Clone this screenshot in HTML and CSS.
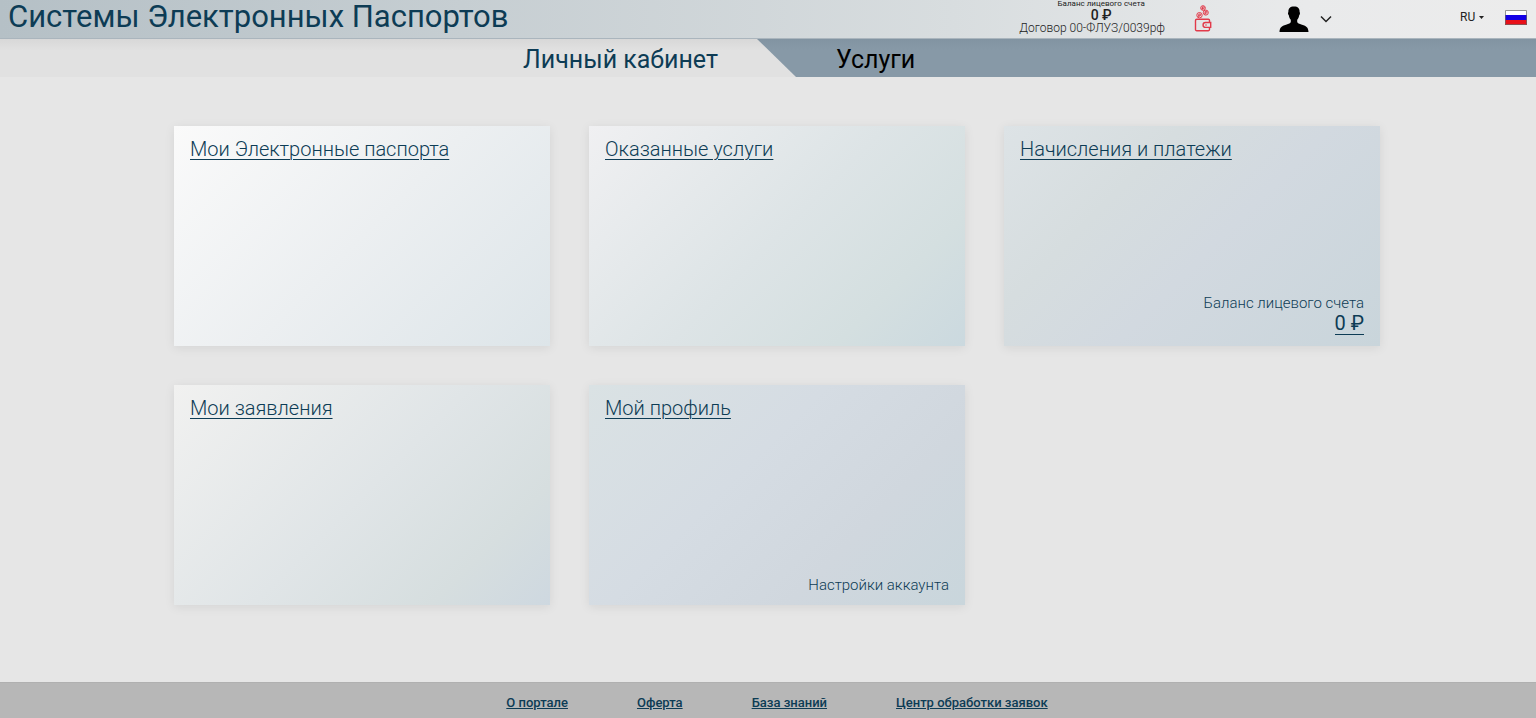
FILE: index.html
```html
<!DOCTYPE html>
<html lang="ru">
<head>
<meta charset="utf-8">
<meta name="viewport" content="width=device-width, initial-scale=1">
<title>Системы Электронных Паспортов</title>
<link rel="stylesheet" href="styles.css">
</head>
<body>
<header class="header">
  <h1 class="brand">Системы Электронных Паспортов</h1>
  <div class="account">
    <div class="account-balance">
      <span class="account-label">Баланс лицевого счета</span>
      <span class="account-sum">0 ₽</span>
    </div>
    <span class="account-contract">Договор 00-ФЛУЗ/0039рф</span>
  </div>
  <button class="icon-button wallet" type="button" aria-label="Пополнить счет">
    <svg width="18" height="28" viewBox="0 0 18 28" fill="none" stroke="#e23a4a">
      <circle cx="9" cy="3" r="2.3"/><path d="M8.4 4.6V1.9h1a.8.8 0 0 1 0 1.7H7.7"/>
      <circle cx="11.8" cy="7.6" r="2.5"/><path d="M11.2 9.4V6.4h1a.8.8 0 0 1 0 1.7h-1.8"/>
      <circle cx="5.5" cy="10.2" r="2.7"/><path d="M4.9 12V9h1a.8.8 0 0 1 0 1.8H4.1"/>
      <path stroke-width="1.4" d="M2.8 14.2h11.6q1.1 0 1.1 1.1v2.2M15.5 22.4v2.2q0 1.1-1.1 1.1H2.8q-1.3 0-1.3-1.3v-8.9q0-1.3 1.3-1.3M16.7 17.5h-5.2a2.4 2.4 0 0 0 0 4.9h5.2z"/>
      <path stroke-width="1.2" d="M11.2 20h1.6"/>
    </svg>
  </button>
  <button class="icon-button user" type="button" aria-label="Меню пользователя">
    <svg width="30" height="27" viewBox="0 0 30 27">
      <path d="M15 .5c4 0 5.800 2 5.600 5.500.7.600.5 2.500-.4 3.200-.3 2-1.100 3.500-2 4.500v2.200c.3 1.100 1.800 1.800 4.800 2.800 4.500 1.500 6.300 2.600 6.500 7.300H.5c.2-4.700 2-5.800 6.500-7.300 3-1 4.500-1.700 4.800-2.800v-2.200c-.9-1-1.700-2.500-2-4.500-.9-.7-1.100-2.600-.4-3.200C9.200 2.500 11 .5 15 .5z"/>
    </svg>
    <svg width="12" height="8" viewBox="0 0 12 8" fill="none" stroke="#222" stroke-width="1.500">
      <path d="M1 1.500l5 5 5-5"/>
    </svg>
  </button>
  <label class="language">
    <select class="language-select" aria-label="Язык">
      <option>RU</option>
      <option>EN</option>
    </select>
    <svg width="5" height="3" viewBox="0 0 5 3"><path d="M0 0h5L2.500 3z" fill="#222"/></svg>
  </label>
  <svg class="flag" width="22" height="15" viewBox="0 0 22 15">
    <path d="M0 0h22v5H0z" fill="#fff"/>
    <path d="M0 5h22v5H0z" fill="#1400e6"/>
    <path d="M0 10h22v5H0z" fill="#e80f18"/>
    <path d="M.5.5h21v14H.5z" fill="none" stroke="#666" stroke-opacity=".7"/>
  </svg>
</header>

<nav class="tabs">
  <div class="tab tab-active"><a class="tab-link" href="#cabinet" aria-current="page">Личный кабинет</a></div>
  <div class="tab"><a class="tab-link" href="#services">Услуги</a></div>
</nav>

<main class="cards">
  <section class="card card-passports">
    <a class="card-title" href="#passports">Мои Электронные паспорта</a>
  </section>
  <section class="card card-services">
    <a class="card-title" href="#rendered">Оказанные услуги</a>
  </section>
  <section class="card card-payments">
    <a class="card-title" href="#payments">Начисления и платежи</a>
    <div class="card-note">
      <span>Баланс лицевого счета</span>
      <a class="card-sum" href="#balance">0 ₽</a>
    </div>
  </section>
  <section class="card card-requests">
    <a class="card-title" href="#requests">Мои заявления</a>
  </section>
  <section class="card card-profile">
    <a class="card-title" href="#profile">Мой профиль</a>
    <div class="card-note">Настройки аккаунта</div>
  </section>
</main>

<footer class="footer">
  <a href="#about">О портале</a>
  <a href="#offer">Оферта</a>
  <a href="#knowledge">База знаний</a>
  <a href="#center">Центр обработки заявок</a>
</footer>
</body>
</html>
```
FILE: styles.css
```css
* {
  box-sizing: border-box;
}

body {
  margin: 0;
  min-height: 100vh;
  display: flex;
  flex-direction: column;
  background: #e6e6e6;
  color: #0d3c55;
  font-family: Roboto, "Noto Sans", sans-serif;
}

a {
  color: inherit;
}

.header {
  display: flex;
  align-items: center;
  min-height: 38px;
  padding: 0 9px 4px 8px;
  background: linear-gradient(90deg, #b5c0c6 0%, #c6ced2 30%, #d8dddf 62%, #e9eaeb 85%, #ececec 100%);
}

.brand {
  margin: 0 auto 0 0;
  font-size: 31px;
  line-height: 34px;
  font-weight: 400;
}

.account {
  display: flex;
  flex-direction: column;
  align-items: center;
  margin-right: 29px;
  color: #222;
}

.account-balance {
  display: flex;
  flex-direction: column;
  align-items: center;
  padding-left: 18px;
}

.account-label {
  font-size: 8px;
  line-height: 8px;
}

.account-sum {
  font-size: 14px;
  line-height: 14px;
  font-weight: 500;
}

.account-contract {
  font-size: 12px;
  line-height: 12px;
  font-weight: 300;
}

.icon-button {
  display: flex;
  align-items: center;
  padding: 0;
  border: 0;
  background: none;
}

.wallet {
  padding-top: 4px;
  margin-right: 67px;
}

.user {
  gap: 11px;
  padding-top: 4px;
  margin-right: 128px;
}

.language {
  display: flex;
  align-items: center;
  margin-right: 21px;
}

.language-select {
  appearance: none;
  width: 19px;
  padding: 0;
  border: 0;
  background: none;
  color: #222;
  font: 400 12px/16px Roboto, sans-serif;
}

.tabs {
  display: grid;
  grid-template-columns: 796fr 740fr;
  border-top: 1px solid #aab5bd;
  background: linear-gradient(#8294a2, #8799a7 30%);
}

.tab {
  padding: 6px 40px 2px;
  color: #000;
  font-size: 25px;
  line-height: 30px;
}

.tab-active {
  padding-right: 78px;
  background: linear-gradient(#d8d8d8, #e1e1e1 30%);
  color: #0d3c55;
  text-align: right;
  clip-path: polygon(0 0, calc(100% - 39px) 0, 100% 100%, 0 100%);
}

.tab-link {
  text-decoration: none;
}

.cards {
  flex: 1;
  display: grid;
  grid-template-columns: repeat(3, 1fr);
  grid-auto-rows: minmax(220px, auto);
  align-content: start;
  gap: 39px;
  padding: 49px 156px 48px 174px;
}

.card {
  display: flex;
  flex-direction: column;
  justify-content: space-between;
  align-items: flex-start;
  padding: 11px 16px;
  box-shadow: 0 2px 10px rgba(0, 0, 0, 0.08);
}

.card-passports {
  background: linear-gradient(135deg, #fafafa, #eceff1 50%, #dde5e9);
}

.card-services {
  background: linear-gradient(135deg, #f0f0f2, #dde4e6 50%, #d4dfe0 78%, #cbd9df);
}

.card-payments {
  background: linear-gradient(135deg, #dde3e6, #d6dddf 30%, #d2d9e0 55%, #c9d5db);
}

.card-requests {
  background: linear-gradient(135deg, #f1f1f0, #e0e5e7 50%, #d6dedf 80%, #ced8e0);
}

.card-profile {
  background: linear-gradient(135deg, #dae2e4, #d5dce3 40%, #d0d7de 70%, #c9d6dc);
}

.card-title {
  font-size: 20px;
  line-height: 24px;
  font-weight: 300;
  text-underline-offset: 3px;
  text-decoration-thickness: 1px;
}

.card-note {
  display: flex;
  flex-direction: column;
  align-items: flex-end;
  align-self: flex-end;
  font-size: 15px;
  line-height: 18px;
  font-weight: 300;
}

.card-sum {
  border-bottom: 1px solid;
  font-size: 20px;
  line-height: 22px;
  font-weight: 400;
  text-decoration: none;
}

.footer {
  display: flex;
  justify-content: center;
  gap: 69px;
  padding: 12px 0 7px 18px;
  border-top: 1px solid #b0b0b0;
  background: #b7b7b7;
  font-size: 13px;
  line-height: 16px;
  font-weight: 500;
}
```
